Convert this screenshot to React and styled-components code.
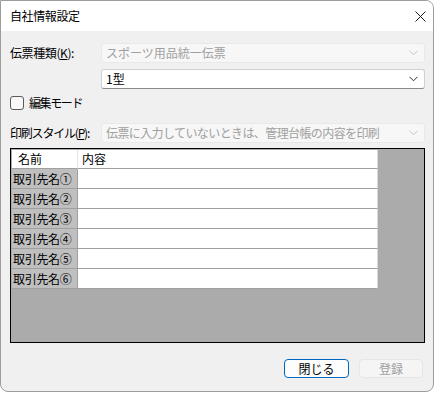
import React from "react";
import styled, { createGlobalStyle } from "styled-components";

const Global = createGlobalStyle`
  html, body { margin: 0; padding: 0; background: #ffffff; }
  body { font-family: "Noto Sans CJK JP", "Noto Sans", sans-serif; font-size: 12px; color: #000; }
  * { box-sizing: border-box; }
`;

const Window = styled.div`
  width: 434px;
  height: 392px;
  border: 1px solid #9c9c9c;
  border-radius: 0 8px 8px 8px;
  background: #f0f0f0;
  display: flex;
  flex-direction: column;
  overflow: hidden;
`;

const TitleBar = styled.div`
  height: 30px;
  background: #ffffff;
  display: flex;
  align-items: center;
  justify-content: space-between;
  padding: 0 7px 0 9px;
  font-size: 12px;
  line-height: 1;
`;

const Title = styled.span`
  padding-bottom: 1px;
  letter-spacing: -0.4px;
`;

const CloseButton = styled.div`
  width: 12px;
  height: 12px;
  display: flex;
  align-items: center;
  justify-content: center;
`;

const Body = styled.div`
  flex: 1;
  display: flex;
  flex-direction: column;
  padding: 12px 8px 0 9px;
`;

const FormRow = styled.div`
  display: flex;
  align-items: center;
  height: 20px;
  margin-top: ${(p) => p.$mt || 0}px;
`;

const Label = styled.div`
  width: 91px;
  flex: none;
  white-space: nowrap;
  line-height: 1;
  letter-spacing: ${(p) => p.$ls || 0}px;
`;

const Combo = styled.div`
  flex: 1;
  height: 20px;
  display: flex;
  align-items: center;
  justify-content: space-between;
  padding: 0 6px 0 4px;
  border: 1px solid ${(p) => (p.$disabled ? "#e9e9e9" : "#d0d0d0")};
  border-bottom-color: ${(p) => (p.$disabled ? "#e9e9e9" : "#8a8a8a")};
  border-radius: 3px;
  background: ${(p) => (p.$disabled ? "#f7f7f7" : "#ffffff")};
  color: ${(p) => (p.$disabled ? "#a0a0a0" : "#000000")};
  white-space: nowrap;
  overflow: hidden;
  line-height: 1;
  letter-spacing: ${(p) => p.$ls || 0}px;
`;

const Chevron = ({ color }) => (
  <svg width="9" height="6" viewBox="0 0 9 6">
    <path d="M0.5 0.8 L4.5 4.8 L8.5 0.8" fill="none" stroke={color} strokeWidth="1" />
  </svg>
);

const CheckRow = styled.label`
  display: flex;
  align-items: center;
  height: 16px;
  margin-top: 6px;
  gap: 5px;
  line-height: 1;
`;

const CheckText = styled.span`
  letter-spacing: -1.4px;
`;

const CheckBox = styled.span`
  width: 14px;
  height: 14px;
  border: 1px solid #5a5a5a;
  border-radius: 3px;
  background: #f8f8f8;
  flex: none;
`;

const GridFrame = styled.div`
  margin-top: 5px;
  height: 195px;
  border: 1px solid #000000;
  background: #ababab;
  padding: 1px;
`;

const Table = styled.div`
  display: grid;
  grid-template-columns: 66px 300px;
  width: 366px;
`;

const HeadCell = styled.div`
  height: 19px;
  background: #ffffff;
  border-bottom: 1px solid #a0a0a0;
  border-right: 1px solid ${(p) => (p.$last ? "#dcdcdc" : "#e4e4e4")};
  padding-left: ${(p) => (p.$last ? 4 : 6)}px;
  display: flex;
  align-items: center;
  line-height: 1;
`;

const RowHead = styled.div`
  height: 20px;
  background: #bfbfbf;
  border-bottom: 1px solid #a0a0a0;
  border-right: 1px solid #a0a0a0;
  padding-left: 1px;
  display: flex;
  align-items: center;
  line-height: 1;
  white-space: nowrap;
  letter-spacing: -0.3px;
`;

const Cell = styled.div`
  height: 20px;
  background: #ffffff;
  border-bottom: 1px solid #a0a0a0;
  border-right: 1px solid #d8d8d8;
`;

const ButtonRow = styled.div`
  display: flex;
  justify-content: flex-end;
  gap: 10px;
  margin-top: 16px;
  padding-right: 2px;
`;

const Button = styled.div`
  width: ${(p) => p.$w}px;
  height: 19px;
  display: flex;
  align-items: center;
  justify-content: center;
  border-radius: 4px;
  line-height: 1;
  background: ${(p) => (p.$primary ? "#fdfdfd" : "#f5f5f5")};
  border: ${(p) => (p.$primary ? "1.5px solid #0067c0" : "1px solid #e6e6e6")};
  color: ${(p) => (p.$primary ? "#000" : "#a0a0a0")};
`;

const rows = ["取引先名①", "取引先名②", "取引先名③", "取引先名④", "取引先名⑤", "取引先名⑥"];

export default function App() {
  return (
    <>
      <Global />
      <Window>
        <TitleBar>
          <Title>自社情報設定</Title>
          <CloseButton>
            <svg width="11" height="11" viewBox="0 0 11 11">
              <path d="M0.5 0.5 L10.5 10.5 M10.5 0.5 L0.5 10.5" stroke="#1a1a1a" strokeWidth="1" />
            </svg>
          </CloseButton>
        </TitleBar>
        <Body>
          <FormRow>
            <Label $ls={-0.4}>伝票種類(<u>K</u>):</Label>
            <Combo $disabled>
              <span>スポーツ用品統一伝票</span>
              <Chevron color="#c4c4c4" />
            </Combo>
          </FormRow>
          <FormRow $mt={6}>
            <Label />
            <Combo>
              <span>1型</span>
              <Chevron color="#303030" />
            </Combo>
          </FormRow>
          <CheckRow>
            <CheckBox />
            <CheckText>編集モード</CheckText>
          </CheckRow>
          <FormRow $mt={12}>
            <Label $ls={-1.2}>印刷スタイル(<u>P</u>):</Label>
            <Combo $disabled $ls={-0.6}>
              <span>伝票に入力していないときは、管理台帳の内容を印刷</span>
              <Chevron color="#c4c4c4" />
            </Combo>
          </FormRow>
          <GridFrame>
            <Table>
              <HeadCell>名前</HeadCell>
              <HeadCell $last>内容</HeadCell>
              {rows.map((r) => (
                <React.Fragment key={r}>
                  <RowHead>{r}</RowHead>
                  <Cell />
                </React.Fragment>
              ))}
            </Table>
          </GridFrame>
          <ButtonRow>
            <Button $primary $w={65}>閉じる</Button>
            <Button $w={64}>登録</Button>
          </ButtonRow>
        </Body>
      </Window>
    </>
  );
}
